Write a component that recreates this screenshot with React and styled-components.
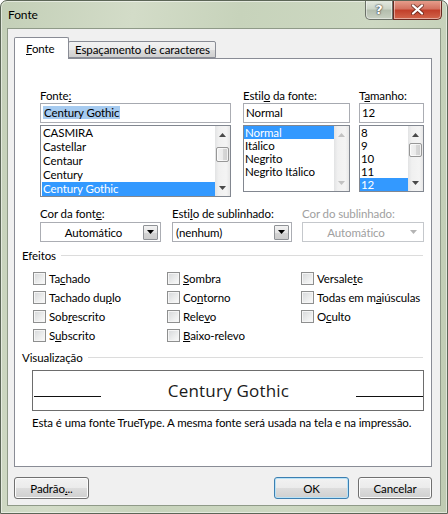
import React from "react";
import styled, { createGlobalStyle } from "styled-components";

const uiFont = `Lato, "Liberation Sans", Arial, sans-serif`;

const GlobalStyle = createGlobalStyle`
  html, body { margin: 0; padding: 0; background: #ffffff; }
  body { font-family: ${uiFont}; font-size: 11.5px; letter-spacing: -0.1px; color: #000; }
  * { box-sizing: border-box; }
`;

const Window = styled.div`
  width: 448px;
  height: 514px;
  border: 1px solid #5c6657;
  border-radius: 7px 7px 0 0;
  background: linear-gradient(100deg, #c3cfb7 0%, #d3dcc8 25%, #c7d3bb 45%, #cdd8c2 70%, #bfcbb2 100%);
  box-shadow: inset 0 0 0 1px rgba(255, 255, 255, 0.5);
  display: flex;
  flex-direction: column;
  overflow: hidden;
`;

const TitleBar = styled.div`
  height: 27px;
  display: flex;
  align-items: flex-start;
  padding-left: 7px;
`;

const Title = styled.div`
  flex: 1;
  padding-top: 6px;
  line-height: 16px;
  font-size: 12px;
  color: #000;
`;

const CaptionButtons = styled.div`
  display: flex;
  margin-top: -1px;
  margin-right: 5px;
  height: 20px;
`;

const CaptionButton = styled.div`
  width: ${({ $w }) => $w}px;
  height: 20px;
  display: flex;
  align-items: center;
  justify-content: center;
  border: 1px solid ${({ $close }) => ($close ? "#6a2a22" : "#6b7168")};
  border-top: none;
  border-radius: ${({ $close }) => ($close ? "0 0 5px 0" : "0 0 0 5px")};
  background: ${({ $close }) =>
    $close
      ? "linear-gradient(180deg, #e8a291 0%, #d47361 45%, #c2402b 55%, #d2664c 100%)"
      : "linear-gradient(180deg, #e6ebe2 0%, #cdd5c8 45%, #b4beae 55%, #c8d0c2 100%)"};
  box-shadow: inset 0 0 0 1px rgba(255, 255, 255, 0.45);
  color: #fff;
  font-family: "DejaVu Sans", sans-serif;
  font-weight: bold;
  font-size: 13px;
  text-shadow: 0 0 2px #333, 0 0 1px #222;
`;

const Client = styled.div`
  flex: 1;
  margin: 0 6px 7px 6px;
  background: #f0f0f0;
  border: 1px solid #8f9a88;
  padding: 8px 8px 0 6px;
  display: flex;
  flex-direction: column;
`;

const TabStrip = styled.div`
  height: 21px;
  display: flex;
  align-items: flex-end;
`;

const Tab = styled.div`
  position: relative;
  z-index: ${({ $active }) => ($active ? 2 : 1)};
  width: ${({ $w }) => $w}px;
  height: ${({ $active }) => ($active ? 22 : 17)}px;
  margin-bottom: ${({ $active }) => ($active ? -1 : 0)}px;
  margin-left: ${({ $active }) => ($active ? 0 : -1)}px;
  border: 1px solid #898c95;
  border-bottom: ${({ $active }) => ($active ? "none" : "1px solid #898c95")};
  border-radius: 2px 2px 0 0;
  background: ${({ $active }) =>
    $active ? "#ffffff" : "linear-gradient(180deg, #f2f2f2 0%, #ebebeb 50%, #dddddd 51%, #cfcfcf 100%)"};
  padding-left: ${({ $active }) => ($active ? 11 : 6)}px;
  padding-top: ${({ $active }) => ($active ? 3 : 0)}px;
  line-height: 15px;
  white-space: nowrap;
`;

const Panel = styled.div`
  width: 418px;
  height: 409px;
  background: #ffffff;
  border: 1px solid #898c95;
  padding: 29px 7px 0 7px;
`;

const Row = styled.div`
  display: flex;
  margin-top: ${({ $top }) => $top || 0}px;
`;

const Column = styled.div`
  width: ${({ $w }) => $w}px;
  margin-left: ${({ $ml }) => $ml}px;
  display: flex;
  flex-direction: column;
`;

const Label = styled.div`
  height: 15px;
  line-height: 15px;
  white-space: nowrap;
  color: ${({ $disabled }) => ($disabled ? "#a0a0a0" : "#000")};
`;

const Key = styled.span`
  text-decoration: underline;
`;

const TextBox = styled.div`
  height: 20px;
  border: 1px solid #abadb3;
  border-top-color: #a6a9b0;
  padding: 1px 2px;
  line-height: 16px;
  white-space: nowrap;
`;

const Selected = styled.span`
  background: #a6cbf0;
  padding: 0 1px;
`;

const ListBox = styled.div`
  margin-top: 2px;
  height: ${({ $h }) => $h}px;
  border: 1px solid #828790;
  display: flex;
`;

const Items = styled.div`
  flex: 1;
  padding-left: ${({ $pl }) => $pl || 0}px;
  overflow: hidden;
`;

const Item = styled.div`
  height: ${({ $h }) => $h}px;
  line-height: ${({ $h }) => $h}px;
  padding-left: 1px;
  white-space: nowrap;
  overflow: hidden;
  background: ${({ $sel }) => ($sel ? "#3399ff" : "transparent")};
  color: ${({ $sel }) => ($sel ? "#ffffff" : "#000")};
`;

const ScrollBar = styled.div`
  width: 15px;
  display: flex;
  flex-direction: column;
  background: linear-gradient(90deg, #e2e3e4 0%, #f0f0f0 25%, #f4f4f4 75%, #e7e7e7 100%);
`;

const ScrollArrow = styled.div`
  height: 17px;
  display: flex;
  align-items: center;
  justify-content: center;
`;

const Track = styled.div`
  flex: 1;
  padding: 0 1px;
`;

const Thumb = styled.div`
  margin-top: ${({ $top }) => $top}px;
  height: ${({ $h }) => $h}px;
  border: 1px solid #979797;
  border-radius: 2px;
  background: linear-gradient(90deg, #f2f2f2 0%, #ebebeb 50%, #d8d8d8 51%, #d0d0d0 100%);
  box-shadow: inset 0 0 0 1px rgba(255, 255, 255, 0.7);
`;

const Combo = styled.div`
  margin-top: 1px;
  height: 20px;
  border: 1px solid ${({ $disabled }) => ($disabled ? "#c5c8cc" : "#abadb3")};
  display: flex;
  align-items: center;
  padding: 0 2px 0 3px;
  color: ${({ $disabled }) => ($disabled ? "#a0a0a0" : "#000")};
`;

const ComboText = styled.div`
  flex: 1;
  text-align: ${({ $center }) => ($center ? "center" : "left")};
  white-space: nowrap;
`;

const DropButton = styled.div`
  width: 15px;
  height: 15px;
  display: flex;
  align-items: center;
  justify-content: center;
  border: 1px solid ${({ $disabled }) => ($disabled ? "transparent" : "#8f9296")};
  border-radius: 1px;
  background: ${({ $disabled }) =>
    $disabled ? "transparent" : "linear-gradient(180deg, #f3f3f3 0%, #e4e4e4 50%, #d4d4d4 51%, #cccccc 100%)"};
`;

const GroupHeader = styled.div`
  margin-top: ${({ $top }) => $top}px;
  height: 15px;
  display: flex;
  align-items: center;
  line-height: 15px;
  padding-right: 1px;

  &::after {
    content: "";
    flex: 1;
    height: 1px;
    margin-left: 5px;
    background: #dcdcdc;
  }
`;

const EffectsGrid = styled.div`
  margin: 6px 0 0 11px;
  display: grid;
  grid-template-columns: 134px 134px 134px;
  grid-auto-rows: 19px;
`;

const CheckItem = styled.div`
  display: flex;
  align-items: center;
  gap: 3px;
  white-space: nowrap;
`;

const CheckBox = styled.span`
  width: 13px;
  height: 13px;
  flex: none;
  border: 1px solid #8e8f8f;
  background: linear-gradient(135deg, #d5d7d9 0%, #ebecec 55%, #fbfbfb 100%);
  box-shadow: inset 0 0 0 1px #f5f5f5;
`;

const Preview = styled.div`
  margin: 5px 0 0 10px;
  width: 392px;
  height: 41px;
  border: 1px solid #6d6d6d;
  display: flex;
  align-items: baseline;
  padding: 9px 0 0 1px;
`;

const BaseLine = styled.div`
  width: 67px;
  height: 1px;
  margin-bottom: -1px;
  background: #111;
`;

const PreviewText = styled.div`
  flex: 1;
  text-align: center;
  font-family: "Open Sans", "Liberation Sans", sans-serif;
  font-size: 17px;
  line-height: 22px;
  letter-spacing: 0.2px;
  color: #1a1a1a;
`;

const Note = styled.div`
  margin: 4px 0 0 10px;
  line-height: 15px;
  white-space: nowrap;
`;

const ButtonRow = styled.div`
  margin-top: 10px;
  display: flex;
  align-items: center;
`;

const Button = styled.div`
  width: ${({ $w }) => $w}px;
  height: 22px;
  margin-left: ${({ $ml }) => $ml || 0}px;
  display: flex;
  align-items: center;
  justify-content: center;
  border: 1px solid ${({ $default }) => ($default ? "#3c7fb1" : "#707070")};
  border-radius: 3px;
  background: linear-gradient(180deg, #f2f2f2 0%, #ebebeb 50%, #dddddd 51%, #cfcfcf 100%);
  box-shadow: inset 0 0 0 1px ${({ $default }) => ($default ? "#b8e2f7" : "#fcfcfc")};
`;

const Spacer = styled.div`
  flex: 1;
`;

const Arrow = ({ up, color = "#4a4a4a" }) => (
  <svg width="7" height="4" viewBox="0 0 7 4">
    <path d={up ? "M0 4 L3.5 0 L7 4 Z" : "M0 0 L7 0 L3.5 4 Z"} fill={color} />
  </svg>
);

const ComboArrow = ({ color = "#000" }) => (
  <svg width="7" height="4" viewBox="0 0 7 4">
    <path d="M0 0 L7 0 L3.5 4 Z" fill={color} />
  </svg>
);

const Scroll = ({ thumb, disabled }) => (
  <ScrollBar>
    <ScrollArrow>
      <Arrow up color={disabled ? "#c2c2c2" : "#4a4a4a"} />
    </ScrollArrow>
    <Track>{thumb && <Thumb $top={thumb.top} $h={thumb.h} />}</Track>
    <ScrollArrow>
      <Arrow color={disabled ? "#c2c2c2" : "#4a4a4a"} />
    </ScrollArrow>
  </ScrollBar>
);

const fonts = ["CASMIRA", "Castellar", "Centaur", "Century", "Century Gothic"];
const styles = ["Normal", "Itálico", "Negrito", "Negrito Itálico"];
const sizes = ["8", "9", "10", "11", "12"];

const effects = [
  <>Ta<Key>c</Key>hado</>,
  <><Key>S</Key>ombra</>,
  <>Versale<Key>t</Key>e</>,
  <>Tachado du<Key>p</Key>lo</>,
  <>Co<Key>n</Key>torno</>,
  <>Todas em m<Key>a</Key>iúsculas</>,
  <>Sob<Key>r</Key>escrito</>,
  <>Rele<Key>v</Key>o</>,
  <>O<Key>c</Key>ulto</>,
  <>S<Key>u</Key>bscrito</>,
  <><Key>B</Key>aixo-relevo</>,
];

export default function App() {
  return (
    <>
      <GlobalStyle />
      <Window>
        <TitleBar>
          <Title>Fonte</Title>
          <CaptionButtons>
            <CaptionButton $w={28}>?</CaptionButton>
            <CaptionButton $w={49} $close>
              <svg width="13" height="11" viewBox="0 0 13 11">
                <path d="M2 1.5 L11 9.5 M11 1.5 L2 9.5" stroke="#3a1510" strokeWidth="4" strokeLinecap="round" opacity="0.55" />
                <path d="M2 1.5 L11 9.5 M11 1.5 L2 9.5" stroke="#ffffff" strokeWidth="2.2" strokeLinecap="round" />
              </svg>
            </CaptionButton>
          </CaptionButtons>
        </TitleBar>

        <Client>
          <TabStrip>
            <Tab $active $w={55}>
              <Key>F</Key>onte
            </Tab>
            <Tab $w={148}>
              Espaçamento de caracteres
            </Tab>
          </TabStrip>

          <Panel>
            <Row>
              <Column $w={191} $ml={18}>
                <Label>Fonte<Key>:</Key></Label>
                <TextBox>
                  <Selected>Century Gothic</Selected>
                </TextBox>
                <ListBox $h={72}>
                  <Items $pl={1}>
                    {fonts.map((f, i) => (
                      <Item key={f} $h={14} $sel={i === fonts.length - 1}>
                        {f}
                      </Item>
                    ))}
                  </Items>
                  <Scroll thumb={{ top: 4, h: 15 }} />
                </ListBox>
              </Column>
              <Column $w={107} $ml={12}>
                <Label>Estil<Key>o</Key> da fonte:</Label>
                <TextBox>Normal</TextBox>
                <ListBox $h={67}>
                  <Items>
                    {styles.map((s, i) => (
                      <Item key={s} $h={13} $sel={i === 0}>
                        {s}
                      </Item>
                    ))}
                  </Items>
                  <Scroll disabled />
                </ListBox>
              </Column>
              <Column $w={65} $ml={9}>
                <Label>T<Key>a</Key>manho:</Label>
                <TextBox>12</TextBox>
                <ListBox $h={67}>
                  <Items>
                    {sizes.map((s, i) => (
                      <Item key={s} $h={13} $sel={i === sizes.length - 1}>
                        {s}
                      </Item>
                    ))}
                  </Items>
                  <Scroll thumb={{ top: 0, h: 14 }} />
                </ListBox>
              </Column>
            </Row>

            <Row $top={9}>
              <Column $w={121} $ml={18}>
                <Label>Cor da font<Key>e</Key>:</Label>
                <Combo>
                  <ComboText $center>Automático</ComboText>
                  <DropButton>
                    <ComboArrow />
                  </DropButton>
                </Combo>
              </Column>
              <Column $w={120} $ml={11}>
                <Label>Esti<Key>l</Key>o de sublinhado:</Label>
                <Combo>
                  <ComboText>(nenhum)</ComboText>
                  <DropButton>
                    <ComboArrow />
                  </DropButton>
                </Combo>
              </Column>
              <Column $w={122} $ml={10}>
                <Label $disabled>Cor do sublinhado:</Label>
                <Combo $disabled>
                  <ComboText $center>Automático</ComboText>
                  <DropButton $disabled>
                    <ComboArrow color="#b4b4b4" />
                  </DropButton>
                </Combo>
              </Column>
            </Row>

            <GroupHeader $top={6}>Efeitos</GroupHeader>
            <EffectsGrid>
              {effects.map((label, i) => (
                <CheckItem key={i}>
                  <CheckBox />
                  <span>{label}</span>
                </CheckItem>
              ))}
            </EffectsGrid>

            <GroupHeader $top={5}>Visualização</GroupHeader>
            <Preview>
              <BaseLine />
              <PreviewText>Century Gothic</PreviewText>
              <BaseLine />
            </Preview>
            <Note>Esta é uma fonte TrueType. A mesma fonte será usada na tela e na impressão.</Note>
          </Panel>

          <ButtonRow>
            <Button $w={75}>
              Padrão<Key>.</Key>..
            </Button>
            <Spacer />
            <Button $w={75} $default>
              OK
            </Button>
            <Button $w={74} $ml={9}>
              Cancelar
            </Button>
          </ButtonRow>
        </Client>
      </Window>
    </>
  );
}
